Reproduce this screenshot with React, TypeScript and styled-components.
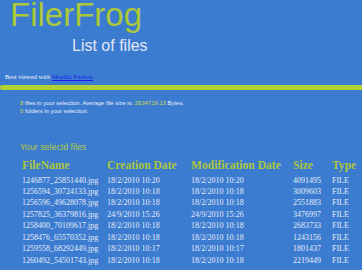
import React from "react";
import styled, { createGlobalStyle } from "styled-components";

const Global = createGlobalStyle`
  html, body { margin: 0; padding: 0; background: #3b7bd0; }
  body { font-family: "Liberation Sans", Arial, sans-serif; }
`;

const Page = styled.div`
  width: 362px;
  height: 270px;
  overflow: hidden;
  background: #3b7bd0;
`;

const Header = styled.header`
  display: flex;
  flex-direction: column;
  padding: 0 0 0 10px;
`;

const Logo = styled.h1`
  margin: -4px 0 0 0;
  font-family: "Liberation Sans", Arial, sans-serif;
  font-weight: normal;
  font-size: 33px;
  line-height: 38px;
  color: #aac83a;
`;

const Subtitle = styled.h2`
  margin: 4px 0 0 62px;
  font-family: "Liberation Sans", Arial, sans-serif;
  font-weight: normal;
  font-size: 16px;
  line-height: 16px;
  color: #e2e8f4;
`;

const BestViewed = styled.div`
  margin: 19px 0 0 5px;
  font-family: "Liberation Serif", "Times New Roman", serif;
  font-size: 6.5px;
  line-height: 8px;
  color: #f0f4fa;
  a { color: #1a1aee; text-decoration: underline; }
`;

const Bar = styled.div`
  margin-top: 4px;
  height: 5px;
  background: #b2d234;
  border-radius: 2px 0 0 2px;
`;

const Info = styled.div`
  margin: 9px 0 0 20px;
  font-family: "Liberation Sans", Arial, sans-serif;
  font-size: 5.9px;
  line-height: 8px;
  color: #e8eef8;
`;

const Num = styled.span`
  color: #d4da4a;
`;

const SectionTitle = styled.h3`
  margin: 27px 0 0 20px;
  font-family: "Liberation Sans", Arial, sans-serif;
  font-weight: normal;
  font-size: 8.8px;
  line-height: 10px;
  color: #b4cc3a;
`;

const Table = styled.div`
  margin: 7px 0 0 22px;
  display: grid;
  grid-template-columns: 85px 84px 102px 39px 1fr;
`;

const Th = styled.div`
  font-family: "Liberation Serif", "Times New Roman", serif;
  font-weight: bold;
  font-size: 11.6px;
  line-height: 14px;
  color: #aec63c;
  padding-bottom: 1.5px;
`;

const Td = styled.div`
  font-family: "Liberation Serif", "Times New Roman", serif;
  font-size: 8px;
  line-height: 11.45px;
  height: 11.45px;
  color: #e6edf8;
  white-space: nowrap;
`;

const rows = [
  ["1246877_25851440.jpg", "18/2/2010 10:20", "18/2/2010 10:20", "4091495", "FILE"],
  ["1256594_30724133.jpg", "18/2/2010 10:18", "18/2/2010 10:18", "3009603", "FILE"],
  ["1256596_49628078.jpg", "18/2/2010 10:18", "18/2/2010 10:18", "2551883", "FILE"],
  ["1257825_36379816.jpg", "24/9/2010 15:26", "24/9/2010 15:26", "3476997", "FILE"],
  ["1258400_70109617.jpg", "18/2/2010 10:18", "18/2/2010 10:18", "2683733", "FILE"],
  ["1258476_65570352.jpg", "18/2/2010 10:18", "18/2/2010 10:18", "1243156", "FILE"],
  ["1259558_68292449.jpg", "18/2/2010 10:17", "18/2/2010 10:17", "1801437", "FILE"],
  ["1260492_54501743.jpg", "18/2/2010 10:18", "18/2/2010 10:18", "2219449", "FILE"],
];

const heads = ["FileName", "Creation Date", "Modification Date", "Size", "Type"];

export default function App() {
  return (
    <Page>
      <Global />
      <Header>
        <Logo>FilerFrog</Logo>
        <Subtitle>List of files</Subtitle>
      </Header>
      <BestViewed>
        Best viewed with <a href="#">Mozilla Firefox</a>
      </BestViewed>
      <Bar />
      <Info>
        <div>
          <Num>8</Num> files in your selection. Average file size is: <Num>2634719.13</Num> Bytes.
        </div>
        <div>
          <Num>0</Num> folders in your selection.
        </div>
      </Info>
      <SectionTitle>Your selectd files</SectionTitle>
      <Table>
        {heads.map((h) => (
          <Th key={h}>{h}</Th>
        ))}
        {rows.map((r, i) => r.map((c, j) => <Td key={i + "-" + j}>{c}</Td>))}
      </Table>
    </Page>
  );
}
